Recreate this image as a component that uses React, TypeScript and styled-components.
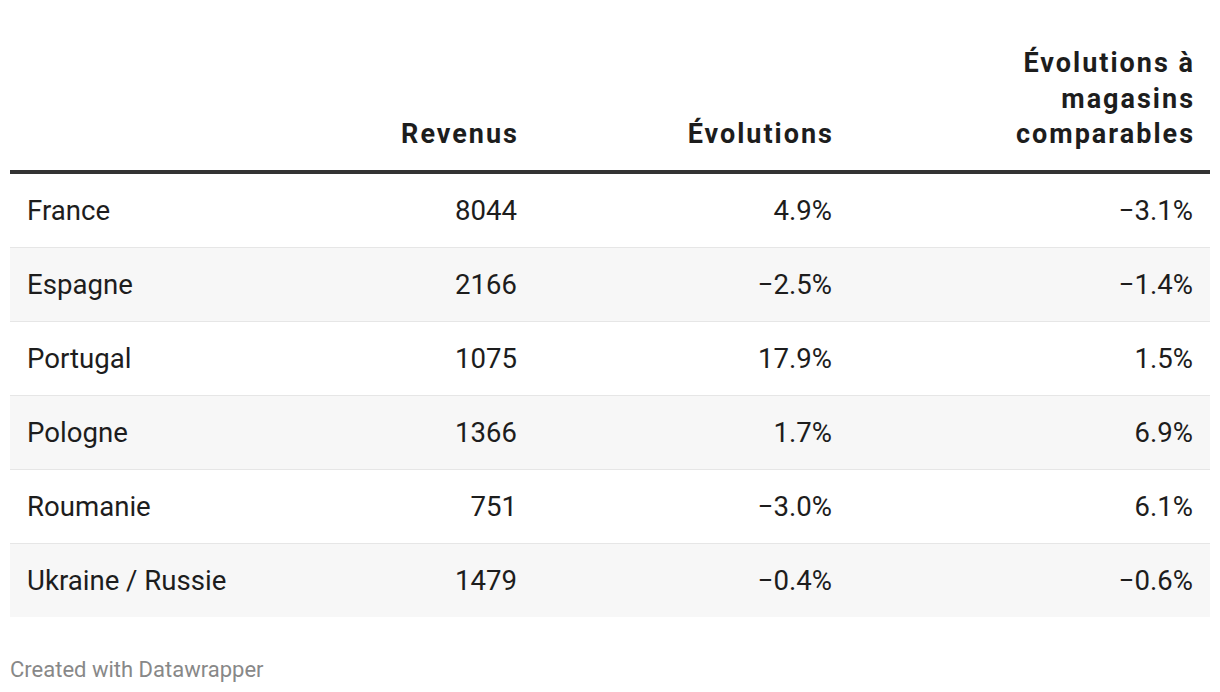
import React from 'react';
import styled, { createGlobalStyle } from 'styled-components';

const GlobalStyle = createGlobalStyle`
    html, body {
        margin:0;
        padding:0;
        background:#ffffff;
    }
    body{
        font-family:Roboto, "Liberation Sans", Arial, sans-serif;
        color:#1d1d1d;
    }
`

const Page = styled.div`
    width:1220px;
    height:692px;
    box-sizing:border-box;
    padding:46px 10px 0 10px;
    display:flex;
    flex-direction:column;
`

const Table = styled.div`
    display:grid;
    grid-template-columns:260px 264px 315px 361px;
    width:1200px;
`

const HeadCell = styled.div<{ $left?: boolean }>`
    display:flex;
    align-items:flex-end;
    justify-content:${(p) => (p.$left ? 'flex-start' : 'flex-end')};
    text-align:${(p) => (p.$left ? 'left' : 'right')};
    padding:0 15px 17px 17px;
    font-size:27px;
    font-weight:700;
    letter-spacing:2px;
    line-height:35.5px;
    color:#1d1d1d;
    border-bottom:4px solid #333333;
`

const Cell = styled.div<{ $left?: boolean; $shaded?: boolean; $first?: boolean }>`
    display:flex;
    align-items:center;
    justify-content:${(p) => (p.$left ? 'flex-start' : 'flex-end')};
    height:73px;
    padding:0 17px;
    font-size:27.6px;
    font-weight:400;
    white-space:nowrap;
    color:#1d1d1d;
    background:${(p) => (p.$shaded ? '#f7f7f7' : '#ffffff')};
    border-top:${(p) => (p.$first ? 'none' : '1px solid #e6e6e6')};
    font-variant-numeric:tabular-nums;
`

const Footer = styled.div`
    margin-top:40px;
    font-size:22px;
    color:#888888;
`

const rows: [string, string, string, string][] = [
    ['France', '8044', '4.9%', '\u22123.1%'],
    ['Espagne', '2166', '\u22122.5%', '\u22121.4%'],
    ['Portugal', '1075', '17.9%', '1.5%'],
    ['Pologne', '1366', '1.7%', '6.9%'],
    ['Roumanie', '751', '\u22123.0%', '6.1%'],
    ['Ukraine / Russie', '1479', '\u22120.4%', '\u22120.6%'],
];

const App = () => {
    return (
        <>
            <GlobalStyle />
            <Page>
                <Table>
                    <HeadCell $left></HeadCell>
                    <HeadCell>Revenus</HeadCell>
                    <HeadCell>Évolutions</HeadCell>
                    <HeadCell>Évolutions à<br />magasins<br />comparables</HeadCell>
                    {rows.map((r, i) =>
                        r.map((v, j) => (
                            <Cell key={i + '-' + j} $left={j === 0} $shaded={i % 2 === 1} $first={i === 0}>
                                {v}
                            </Cell>
                        ))
                    )}
                </Table>
                <Footer>Created with Datawrapper</Footer>
            </Page>
        </>
    )
}

export default App;
